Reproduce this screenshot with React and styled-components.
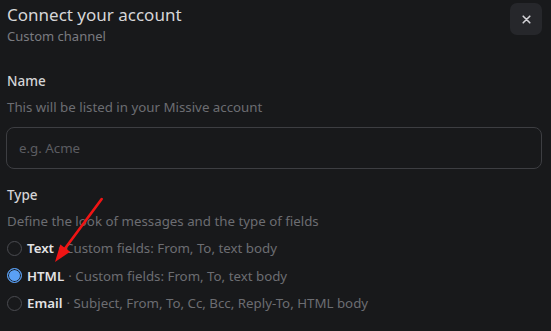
import styled, { createGlobalStyle } from "styled-components";

const GlobalStyle = createGlobalStyle`
	html, body {
		margin: 0;
		padding: 0;
		background: #18191b;
	}
	body {
		font-family: "Noto Sans", "Open Sans", sans-serif;
		-webkit-font-smoothing: antialiased;
	}
`;

const types = [
	{ id: "text", name: "Text", desc: "Custom fields: From, To, text body" },
	{ id: "html", name: "HTML", desc: "Custom fields: From, To, text body" },
	{ id: "email", name: "Email", desc: "Subject, From, To, Cc, Bcc, Reply-To, HTML body" },
];

const App = () => {
	return (
		<>
			<GlobalStyle />
			<Dialog>
				<Header>
					<div>
						<Title>Connect your account</Title>
						<Subtitle>Custom channel</Subtitle>
					</div>
					<CloseButton aria-label="Close">
						<svg width="9" height="9" viewBox="0 0 9 9">
							<path d="M1.2 1.2L7.8 7.8M7.8 1.2L1.2 7.8" stroke="#d2d2d6" strokeWidth="1.6" strokeLinecap="round" />
						</svg>
					</CloseButton>
				</Header>

				<Field $space={26}>
					<Label>Name</Label>
					<Hint>This will be listed in your Missive account</Hint>
					<Input placeholder="e.g. Acme" />
				</Field>

				<Field $space={16}>
					<Label>Type</Label>
					<Hint>Define the look of messages and the type of fields</Hint>
					<Options>
						{types.map((t) => (
							<Option key={t.id}>
								<Radio $checked={t.id === "html"} />
								<OptionName>{t.name}</OptionName>
								<OptionDesc>· {t.desc}</OptionDesc>
							</Option>
						))}
					</Options>
				</Field>

				<Arrow width="60" height="80" viewBox="0 0 60 80">
					<path d="M54.7 8L18.2 57.2" stroke="#f01414" strokeWidth="2.6" strokeLinecap="round" />
					<path d="M8 71L13.3 53.6L23.1 60.8Z" fill="#f01414" />
				</Arrow>
			</Dialog>
		</>
	);
};

export default App;

const Dialog = styled.div`
	position: relative;
	width: 551px;
	height: 331px;
	box-sizing: border-box;
	padding: 3px 9px 0 7px;
	overflow: hidden;
`;

const Header = styled.div`
	display: flex;
	justify-content: space-between;
	align-items: flex-start;
`;

const Title = styled.div`
	color: #d6d6d8;
	font-size: 17px;
	line-height: 24px;
`;

const Subtitle = styled.div`
	color: #7a7b80;
	font-size: 13px;
	line-height: 18px;
`;

const CloseButton = styled.button`
	width: 32px;
	height: 32px;
	border: none;
	border-radius: 7px;
	background: #26272b;
	display: flex;
	align-items: center;
	justify-content: center;
	padding: 0;
	cursor: pointer;
`;

const Field = styled.div`
	display: flex;
	flex-direction: column;
	margin-top: ${(p) => p.$space}px;
`;

const Label = styled.div`
	color: #d4d4d6;
	font-size: 13.5px;
	font-weight: 500;
	line-height: 20px;
`;

const Hint = styled.div`
	color: #6c6d72;
	font-size: 13.3px;
	line-height: 20px;
	margin-top: 6px;
`;

const Input = styled.input`
	margin: 10px 0 0 -1px;
	height: 42px;
	box-sizing: border-box;
	border: 1px solid #3d3e42;
	border-radius: 8px;
	background: #18191b;
	padding: 0 12px;
	font-family: inherit;
	font-size: 13.3px;
	color: #d4d4d6;
	outline: none;
	&::placeholder {
		color: #5c5d62;
	}
`;

const Options = styled.div`
	display: flex;
	flex-direction: column;
	gap: 7.5px;
	margin-top: 7px;
`;

const Option = styled.label`
	display: flex;
	align-items: center;
	height: 20px;
	font-size: 13.3px;
	white-space: nowrap;
`;

const Radio = styled.span`
	width: 15px;
	height: 15px;
	box-sizing: border-box;
	border-radius: 50%;
	margin-right: 5px;
	border: 1.5px solid ${(p) => (p.$checked ? "#5aa0f5" : "#4a4b50")};
	background: ${(p) => (p.$checked ? "#5aa0f5" : "transparent")};
	box-shadow: ${(p) => (p.$checked ? "inset 0 0 0 1px #18191b" : "none")};
`;

const OptionName = styled.span`
	color: #e2e2e4;
	font-weight: 600;
	margin-right: 4px;
`;

const OptionDesc = styled.span`
	color: #6c6d72;
`;

const Arrow = styled.svg`
	position: absolute;
	left: 47px;
	top: 191px;
`;
